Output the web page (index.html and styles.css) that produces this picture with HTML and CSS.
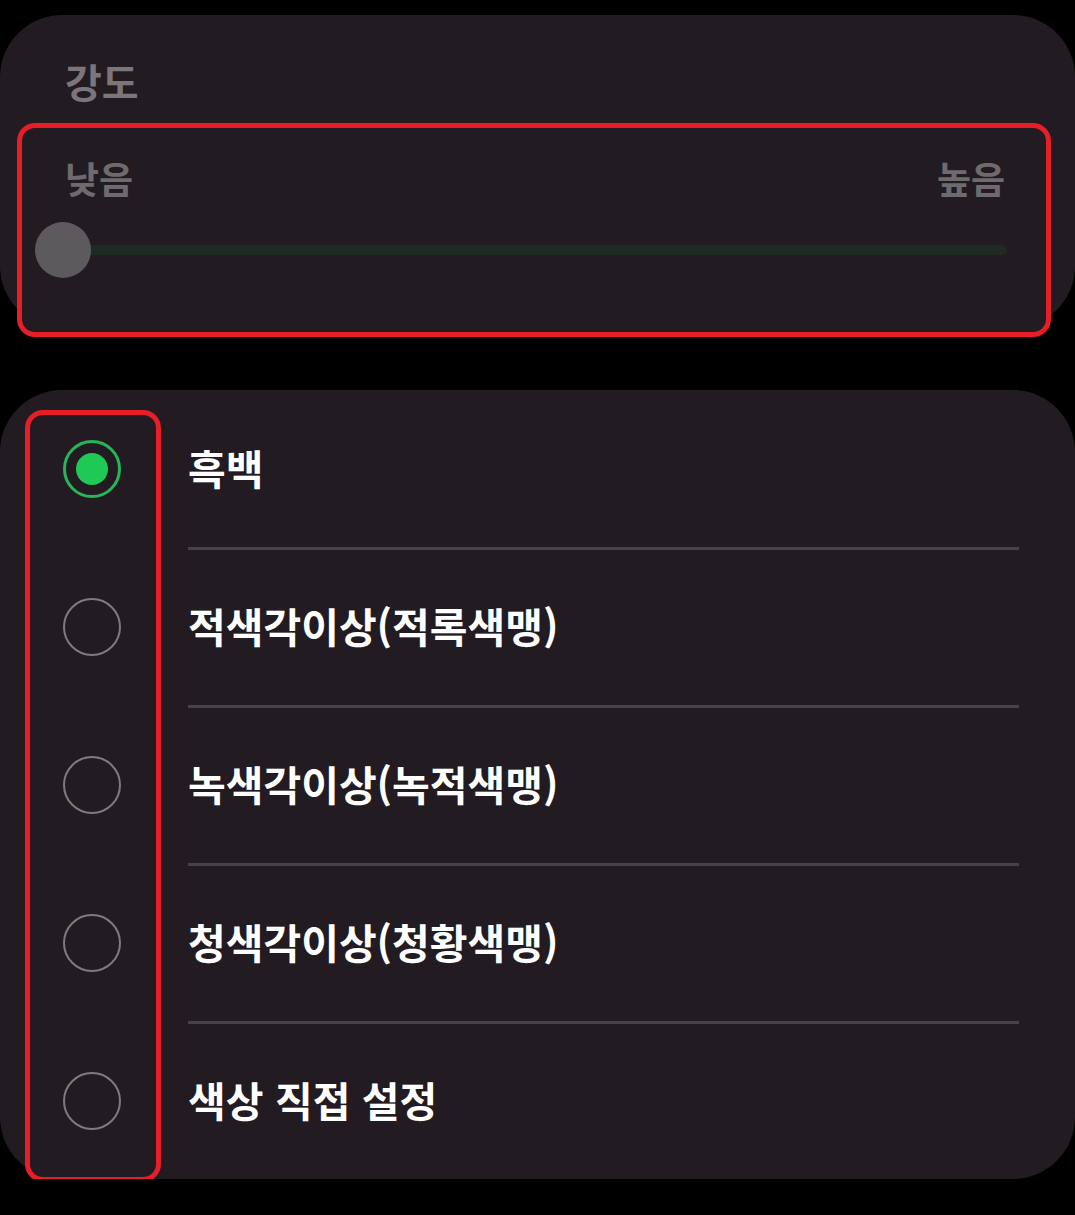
FILE: index.html
```html
<!DOCTYPE html>
<html lang="ko">
<head>
    <meta charset="UTF-8">
    <meta name="viewport" content="width=device-width, initial-scale=1.0">
    <title>색상 보정</title>
    <link rel="stylesheet" href="styles.css">
</head>
<body>
    <!-- Intensity Card -->
    <div class="card intensity">
        <div class="title">강도</div>
        <div class="highlight slider-box">
            <div class="range-labels">
                <span>낮음</span>
                <span>높음</span>
            </div>
            <div class="slider">
                <div class="track"></div>
                <div class="thumb"></div>
            </div>
        </div>
    </div>

    <!-- Options Card -->
    <div class="card options">
        <div class="highlight radio-list">
            <div class="radio checked"></div>
            <div class="radio"></div>
            <div class="radio"></div>
            <div class="radio"></div>
            <div class="radio"></div>
        </div>
        <div class="labels">
            <div class="option">흑백</div>
            <div class="option">적색각이상(적록색맹)</div>
            <div class="option">녹색각이상(녹적색맹)</div>
            <div class="option">청색각이상(청황색맹)</div>
            <div class="option">색상 직접 설정</div>
        </div>
    </div>
</body>
</html>
```

FILE: styles.css
```css
/* Page */
body {
    margin: 0;
    background: #000000;
    font-family: "Noto Sans CJK KR", "Noto Sans", sans-serif;
    font-weight: 700;
}

/* Cards */
.card {
    background: #221b21;
    border-radius: 62px;
    box-sizing: border-box;
}

.intensity {
    margin-top: 15px;
    height: 313px;
    padding-top: 46px;
}

.title {
    font-size: 40px;
    line-height: 1;
    color: #7a767a;
    padding-left: 65px;
}

/* Red annotation boxes */
.highlight {
    border: 5px solid #e61e27;
    border-radius: 18px;
    background: #221b21;
    box-sizing: border-box;
}

/* Slider */
.slider-box {
    margin: 22px 24px 0 17px;
    padding: 32px 41px 54px 43px;
}

.range-labels {
    display: flex;
    justify-content: space-between;
    font-size: 37px;
    line-height: 1;
    color: #6e6a6e;
}

.slider {
    position: relative;
    display: flex;
    align-items: center;
    height: 56px;
    margin: 25px -2px 0 -30px;
}

.track {
    flex: 1;
    height: 10px;
    margin-left: 28px;
    border-radius: 5px;
    background: #1f2a24;
}

.thumb {
    position: absolute;
    left: 0;
    top: 0;
    width: 56px;
    height: 56px;
    border-radius: 50%;
    background: #5c5a5c;
}

/* Options */
.options {
    margin-top: 62px;
    height: 789px;
    padding-top: 2px;
    display: flex;
    align-items: flex-start;
}

.radio-list {
    width: 136px;
    margin: 18px 0 0 25px;
    padding: 25px 0 47px 33px;
    display: flex;
    flex-direction: column;
    gap: 100px;
}

.radio {
    width: 58px;
    height: 58px;
    box-sizing: border-box;
    border: 2.5px solid #7e7b7e;
    border-radius: 50%;
    display: flex;
    justify-content: center;
    align-items: center;
}

.radio.checked {
    border: 3px solid #27b45a;
}

.radio.checked::after {
    content: "";
    width: 32px;
    height: 32px;
    border-radius: 50%;
    background: #1ec955;
}

.labels {
    flex: 1;
    margin: 0 56px 0 27px;
}

.option {
    height: 155px;
    padding-bottom: 5px;
    box-sizing: border-box;
    display: flex;
    align-items: center;
    font-size: 41px;
    line-height: 1;
    color: #ffffff;
}

.option + .option {
    height: 158px;
    border-top: 3px solid #48414a;
}
```
